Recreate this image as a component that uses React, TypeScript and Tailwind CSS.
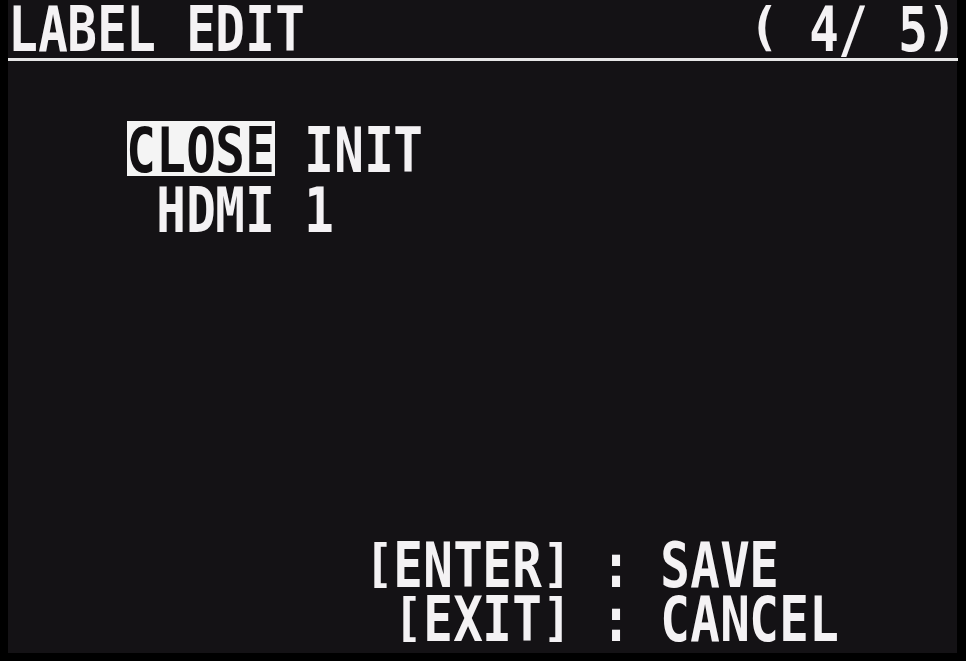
import React from 'react';

// brackets and parens on this display only span the cap height
const SHORT = '()[]';

const Cell: React.FC<{ ch: string }> = ({ ch }) => (
  <span className="inline-flex w-[29.66px] shrink-0 justify-center">
    <span
      className={
        SHORT.includes(ch)
          ? 'inline-block scale-x-[0.78] scale-y-[0.82] origin-[50%_12px]'
          : 'inline-block scale-x-[0.78]'
      }
    >
      {ch === ' ' ? '\u00a0' : ch}
    </span>
  </span>
);

const Chars: React.FC<{ text: string }> = ({ text }) => (
  <>
    {[...text].map((c, i) => (
      <Cell key={i} ch={c} />
    ))}
  </>
);

export default function App() {
  return (
    <div className="w-[966px] h-[661px] bg-black pl-[8px] overflow-hidden">
      <div
        className="w-[949px] h-[653px] bg-[#141215] text-[#f4f2f4] text-[63px] font-bold flex flex-col pb-[6px] whitespace-nowrap"
        style={{ fontFamily: '"DejaVu Sans Mono", "Liberation Mono", monospace' }}
      >
        {/* Header */}
        <div className="flex h-[56px] mt-[2px] leading-[56px]">
          <Chars text="LABEL EDIT               ( 4/ 5)" />
        </div>
        <div className="h-[3px] w-[950px] bg-[#e6e6e6]" />

        {/* Label list */}
        <div className="flex h-[60px] mt-[60px] leading-[60px]">
          <Chars text="    " />
          <span className="flex h-[55px] self-start bg-[#f4f4f4] text-[#121012]">
            <Chars text="CLOSE" />
          </span>
          <Chars text=" INIT" />
        </div>
        <div className="flex h-[60px] leading-[60px]">
          <Chars text="     HDMI 1" />
        </div>

        {/* Key guide */}
        <div className="mt-auto flex flex-col leading-[54px]">
          <div className="flex h-[54px]">
            <Chars text="            [ENTER] : SAVE" />
          </div>
          <div className="flex h-[54px]">
            <Chars text="             [EXIT] : CANCEL" />
          </div>
        </div>
      </div>
    </div>
  );
}
